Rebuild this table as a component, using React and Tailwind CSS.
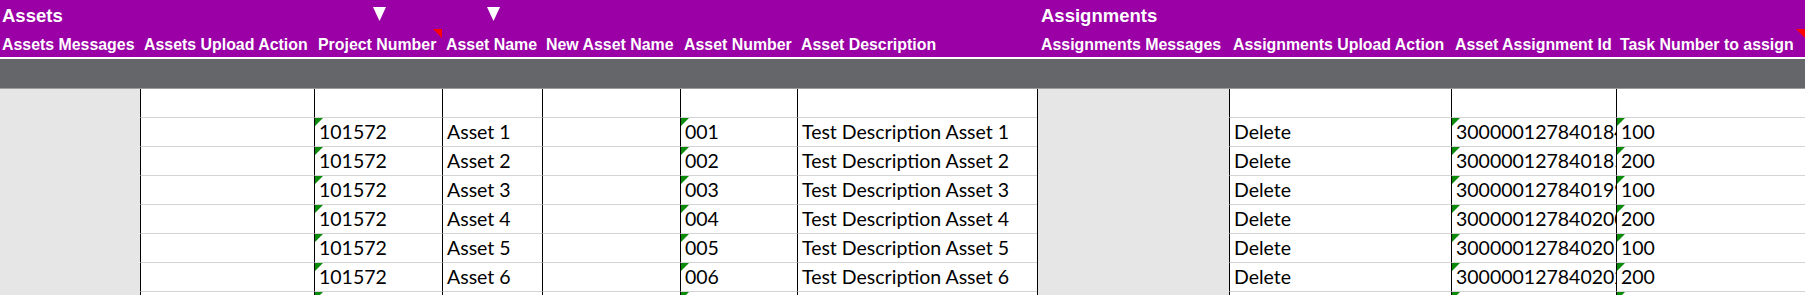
import React from "react";

const cols = [
  { key: "msg", label: "Assets Messages", shaded: true },
  { key: "upload", label: "Assets Upload Action" },
  { key: "project", label: "Project Number", flag: "green", comment: true },
  { key: "name", label: "Asset Name" },
  { key: "newName", label: "New Asset Name" },
  { key: "number", label: "Asset Number", flag: "green" },
  { key: "desc", label: "Asset Description" },
  { key: "aMsg", label: "Assignments Messages", shaded: true },
  { key: "aUpload", label: "Assignments Upload Action" },
  { key: "assignId", label: "Asset Assignment Id", flag: "green" },
  { key: "task", label: "Task Number to assign", flag: "green", comment: true },
];

const gridCols =
  "grid grid-cols-[140px_174px_128px_100px_138px_117px_240px_192px_222px_165px_189px]";

const ids = ["184", "185", "199", "200", "201", "202", "203"];

const rows = ids.map((id, i) => ({
  upload: "",
  project: "101572",
  name: `Asset ${i + 1}`,
  newName: "",
  number: `00${i + 1}`,
  desc: `Test Description Asset ${i + 1}`,
  aUpload: "Delete",
  assignId: `300000127840${id}`,
  task: i % 2 === 0 ? "100" : "200",
}));

function GreenFlag() {
  return (
    <svg className="absolute left-0 top-0" width="8" height="8" viewBox="0 0 8 8">
      <polygon points="0,0 8,0 0,8" fill="#0b8a0b" />
    </svg>
  );
}

function RedFlag() {
  return (
    <svg className="absolute right-0 top-0" width="9" height="9" viewBox="0 0 9 9">
      <polygon points="0,0 9,0 9,9" fill="#ff0000" />
    </svg>
  );
}

function DropArrow() {
  return (
    <svg width="13" height="14" viewBox="0 0 13 14" className="mt-[7px]">
      <polygon points="0,0 13,0 6.5,14" fill="#ffffff" />
    </svg>
  );
}

function DataRow({ row }) {
  return (
    <div className={`${gridCols} h-[29px]`}>
      {cols.map((c, i) => {
        if (c.shaded) {
          return (
            <div
              key={c.key}
              className={`bg-[#e6e6e6] ${i > 0 ? "border-l border-black" : ""}`}
            />
          );
        }
        const value = row ? row[c.key] : "";
        return (
          <div
            key={c.key}
            className="relative overflow-hidden whitespace-nowrap border-l border-b border-l-black border-b-[#d4d4d4] bg-white pl-[4px] leading-[28px]"
          >
            {row && c.flag && <GreenFlag />}
            {value}
          </div>
        );
      })}
    </div>
  );
}

export default function App() {
  return (
    <div className="h-[295px] w-[1805px] overflow-hidden bg-white">
      <div className="bg-[#9a00a6] font-['Liberation_Sans',Arial,sans-serif] font-bold text-white">
        <div className={`${gridCols} h-[29px]`}>
          <div className="whitespace-nowrap pl-[2px] pt-[1px] text-[18.5px] leading-[29px]">
            Assets
          </div>
          <div />
          <div className="flex justify-center pl-[2px]">
            <DropArrow />
          </div>
          <div className="flex justify-center pl-[2px]">
            <DropArrow />
          </div>
          <div />
          <div />
          <div />
          <div className="whitespace-nowrap pl-[4px] pt-[1px] text-[18.5px] leading-[29px]">
            Assignments
          </div>
          <div />
          <div />
          <div />
        </div>
        <div className={`${gridCols} h-[28px]`}>
          {cols.map((c, i) => (
            <div
              key={c.key}
              className={`relative whitespace-nowrap pt-[2px] text-[15.9px] leading-[28px] ${
                i === 0 ? "pl-[2px]" : "pl-[4px]"
              }`}
            >
              {c.comment && <RedFlag />}
              {c.label}
            </div>
          ))}
        </div>
      </div>
      <div className="h-[2px] bg-white" />
      <div className="h-[30px] border-b border-[#9c9c9c] bg-[#646669]" />
      <div className="font-['Lato',sans-serif] text-[19.5px] text-black">
        <DataRow row={null} />
        {rows.map((r, i) => (
          <DataRow key={i} row={r} />
        ))}
      </div>
    </div>
  );
}
